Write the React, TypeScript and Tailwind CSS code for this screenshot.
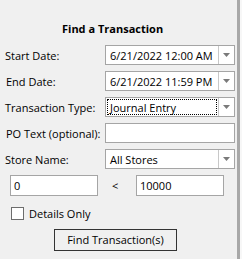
import React from 'react'

const font = "font-['Open_Sans','Noto_Sans',sans-serif]"

function Arrow() {
  return (
    <div className="w-[16px] h-full border-l border-[#c8c8c8] flex items-center justify-center">
      <svg width="7" height="4" viewBox="0 0 7 4">
        <path d="M0 0 H7 L3.5 4 Z" fill="#7a7a7a" />
      </svg>
    </div>
  )
}

function Row({ label, children, indent = 'pl-[5px]' }: { label: string; children: React.ReactNode; indent?: string }) {
  return (
    <div className="flex items-center h-[20px]">
      <div className={`w-[105px] whitespace-nowrap text-[11px] text-black leading-none ${indent}`}>{label}</div>
      {children}
    </div>
  )
}

function Combo({ value, focus = false }: { value: string; focus?: boolean }) {
  return (
    <div className="w-[130px] h-[20px] border border-[#a5a5a5] bg-white flex items-stretch">
      <div className="flex-1 flex items-center px-[1px] py-[1px]">
        <div
          className={`w-full h-full flex items-center pl-[2px] whitespace-nowrap text-[11px] leading-none text-black ${
            focus ? 'border border-dotted border-black' : 'border border-transparent'
          }`}
        >
          {value}
        </div>
      </div>
      <Arrow />
    </div>
  )
}

export default function App() {
  return (
    <div className={`w-[242px] h-[259px] bg-[#f0f0f0] flex overflow-hidden ${font}`}>
      <div className="w-[237px] flex flex-col">
        {/* Title */}
        <div className="pt-[21px] h-[38px] pl-[62px] whitespace-nowrap text-[11px] font-bold leading-[16px] text-black">
          Find a Transaction
        </div>

        <div className="flex flex-col gap-[6px] mt-[7px]">
          <Row label="Start Date:">
            <Combo value="6/21/2022 12:00 AM" />
          </Row>
          <Row label="End Date:" indent="pl-[6px]">
            <Combo value="6/21/2022 11:59 PM" />
          </Row>
          <Row label="Transaction Type:">
            <Combo value="Journal Entry" focus />
          </Row>
          <Row label="PO Text (optional):" indent="pl-[6px]">
            <div className="w-[130px] h-[20px] border border-[#a5a5a5] bg-white" />
          </Row>
          <Row label="Store Name:">
            <Combo value="All Stores" />
          </Row>
        </div>

        {/* Amount range */}
        <div className="flex items-center mt-[6px] pl-[10px] h-[21px]">
          <div className="w-[88px] h-[21px] border border-[#a5a5a5] bg-white flex items-center pl-[3px] text-[11px] leading-none">
            0
          </div>
          <div className="w-[38px] pl-[14px] text-[11px] leading-none">&lt;</div>
          <div className="w-[88px] h-[21px] border border-[#a5a5a5] bg-white flex items-center pl-[3px] text-[11px] leading-none">
            10000
          </div>
        </div>

        {/* Details only */}
        <label className="flex items-center mt-[10px] pl-[11px] h-[14px]">
          <span className="w-[13px] h-[13px] border border-[#6d6d6d] bg-white" />
          <span className="ml-[5px] text-[11px] leading-none">Details Only</span>
        </label>

        <div className="mt-[6px] pl-[54px]">
          <button className="w-[123px] h-[22px] border border-[#333] bg-[#f0f0f0] whitespace-nowrap text-[11px] leading-none text-black">
            Find Transaction(s)
          </button>
        </div>
      </div>

      {/* Panel edge */}
      <div className="w-[3px] bg-[#a8a8a8]" />
      <div className="w-[2px] bg-[#f7f7f7]" />
    </div>
  )
}
